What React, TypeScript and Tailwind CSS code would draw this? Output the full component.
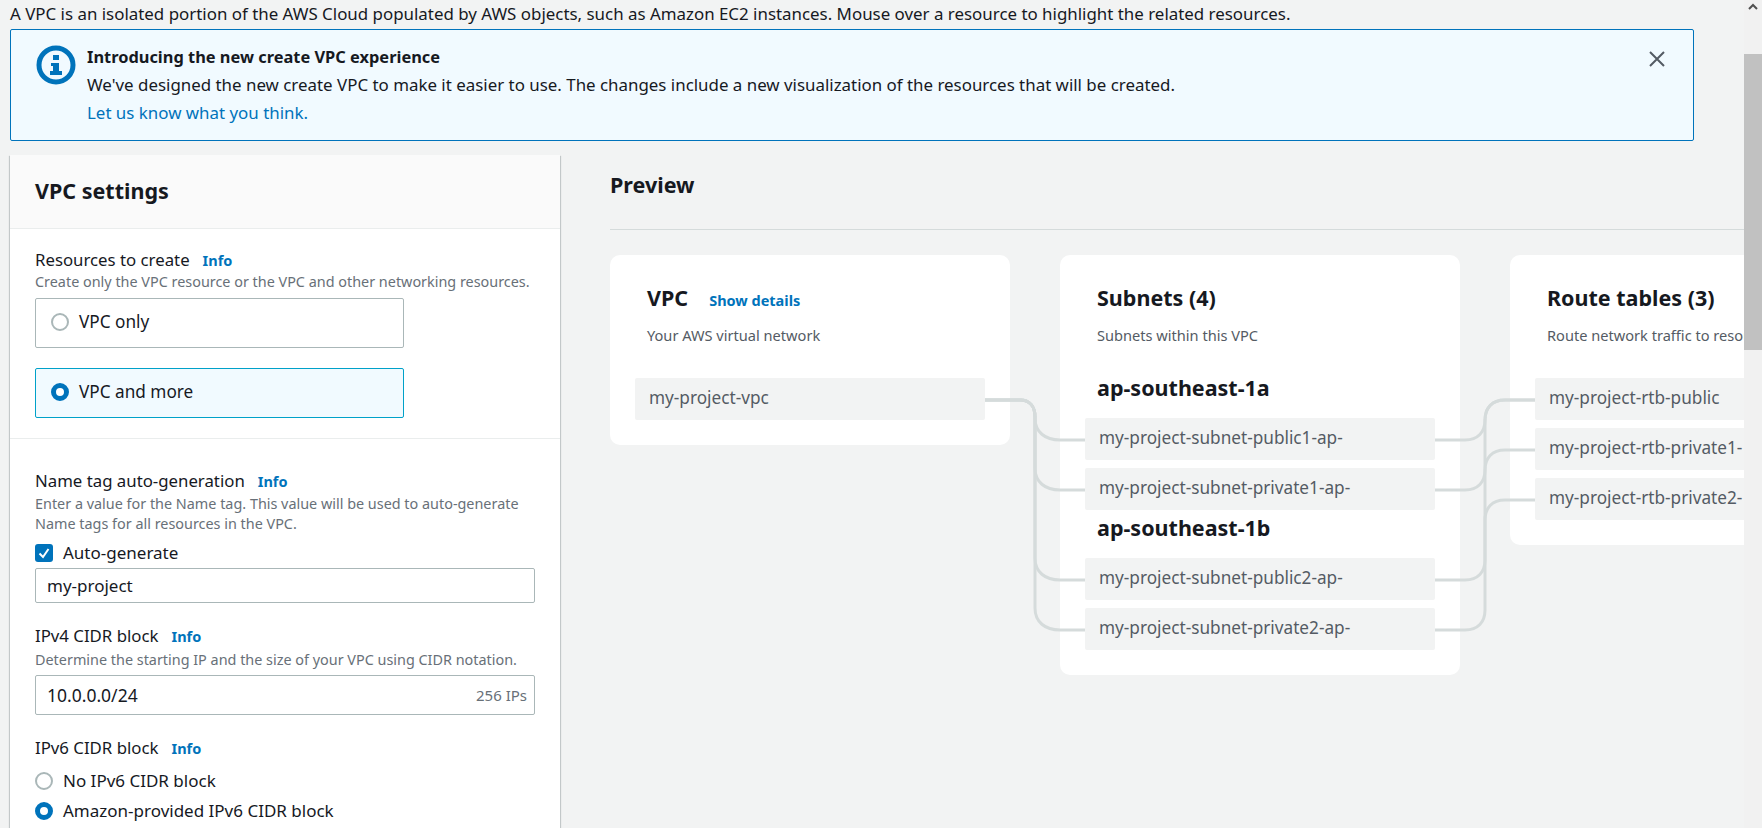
const info = 'text-[14.5px] font-bold text-[#0073bb]'

function Info() {
  return <span className={`${info} ml-[13px]`}>Info</span>
}

function Radio({ checked }: { checked?: boolean }) {
  return checked ? (
    <span className="w-[18px] h-[18px] rounded-full border-[5px] border-[#0073bb] bg-white shrink-0" />
  ) : (
    <span className="w-[18px] h-[18px] rounded-full border-2 border-[#aab7b8] bg-white shrink-0" />
  )
}

function Row({ children, className = '' }: { children: string; className?: string }) {
  return (
    <div className={`h-[42px] mx-[25px] px-[14px] pb-[2px] rounded-[2px] bg-[#f2f3f3] text-[17.2px] text-[#545b64] flex items-center whitespace-nowrap overflow-hidden ${className}`}>
      {children}
    </div>
  )
}

function Links() {
  const stroke = { fill: 'none', stroke: '#d5dbdb', strokeWidth: 3 }
  const left = [185, 235, 325, 375]
  // right side: each subnet goes up to its route table row
  const right = [
    [185, 145],
    [235, 195],
    [325, 145],
    [375, 245],
  ]
  return (
    <svg className="absolute left-0 top-0 z-10 pointer-events-none" width="1000" height="430">
      {left.map(y => (
        <path key={y} {...stroke} d={`M375 145 H410 C420 145 425 152 425 162 V${y - 22} C425 ${y - 8} 435 ${y} 450 ${y} H475`} />
      ))}
      {right.map(([from, to]) => (
        <path key={from} {...stroke} d={`M825 ${from} H855 C868 ${from} 875 ${from - 8} 875 ${from - 20} V${to + 20} C875 ${to + 8} 882 ${to} 895 ${to} H925`} />
      ))}
    </svg>
  )
}

export default function App() {
  return (
    <div className="h-[828px] w-full overflow-hidden flex bg-[#f2f3f3] text-[#16191f] font-['Noto_Sans',sans-serif]">
      <div className="flex-1 min-w-0 flex flex-col">
        <div className="h-[29px] pl-[10px] text-[16.9px] leading-[28px] whitespace-nowrap">
          A VPC is an isolated portion of the AWS Cloud populated by AWS objects, such as Amazon EC2 instances. Mouse over a resource to highlight the related resources.
        </div>

        {/* Alert */}
        <div className="ml-[10px] w-[1684px] h-[112px] shrink-0 border border-[#0073bb] rounded-[2px] bg-[#f1faff] flex pl-[25px] pr-[27px] pt-[13px]">
          <svg className="shrink-0 mt-[2px] mr-[11px]" width="40" height="40" viewBox="0 0 40 40">
            <circle cx="20" cy="20" r="17" fill="none" stroke="#0073bb" strokeWidth="5" />
            <rect x="17" y="10" width="6" height="5" fill="#0073bb" />
            <rect x="15" y="18" width="8" height="3" fill="#0073bb" />
            <rect x="17" y="18" width="6" height="10" fill="#0073bb" />
            <rect x="14" y="26" width="12" height="4" fill="#0073bb" />
          </svg>
          <div className="flex-1 text-[16.9px] leading-[28px]">
            <div className="font-bold text-[16.4px]">Introducing the new create VPC experience</div>
            <div>We've designed the new create VPC to make it easier to use. The changes include a new visualization of the resources that will be created.</div>
            <div className="text-[#0073bb]">Let us know what you think.</div>
          </div>
          <svg className="mt-[7px]" width="18" height="18" viewBox="0 0 18 18">
            <path d="M2 2 L16 16 M16 2 L2 16" fill="none" stroke="#545b64" strokeWidth="2" />
          </svg>
        </div>

        <div className="flex-1 min-h-0 flex mt-[14px]">
          {/* VPC settings */}
          <div className="ml-[10px] w-[550px] shrink-0 bg-white shadow-[0_1px_1px_0_rgba(0,28,36,0.3),1px_1px_1px_0_rgba(0,28,36,0.15),-1px_1px_1px_0_rgba(0,28,36,0.15)]">
            <div className="h-[74px] bg-[#fafafa] border-b border-[#eaeded] px-[25px] pt-[22px] text-[21.5px] leading-[28px] font-bold">
              VPC settings
            </div>

            <div className="h-[210px] px-[25px] pt-[18px] border-b border-[#eaeded]">
              <div className="h-[25px] text-[16.8px] leading-[26px]">
                Resources to create<Info />
              </div>
              <div className="h-[21px] text-[14.4px] leading-[20px] text-[#687078]">
                Create only the VPC resource or the VPC and other networking resources.
              </div>
              <label className="mt-[5px] w-[369px] h-[50px] rounded-[2px] border border-[#aab7b8] flex items-center pl-[15px] pb-[2px] gap-[10px] text-[17.2px]">
                <Radio />
                VPC only
              </label>
              <label className="mt-[20px] w-[369px] h-[50px] rounded-[2px] border border-[#00a1c9] bg-[#f1faff] flex items-center pl-[15px] pb-[2px] gap-[10px] text-[17.2px]">
                <Radio checked />
                VPC and more
              </label>
            </div>

            <div className="px-[25px] pt-[29px]">
              <div className="h-[26px] text-[16.8px] leading-[26px]">
                Name tag auto-generation<Info />
              </div>
              <div className="w-[500px] text-[14.4px] leading-[20px] text-[#687078]">
                Enter a value for the Name tag. This value will be used to auto-generate Name tags for all resources in the VPC.
              </div>
              <div className="mt-[6px] h-[26px] flex items-center gap-[10px] text-[17px]">
                <span className="w-[18px] h-[18px] rounded-[3px] bg-[#0073bb] flex items-center justify-center">
                  <svg width="14" height="14" viewBox="0 0 14 14">
                    <path d="M2.5 7.5 L6 11 L11.5 3" fill="none" stroke="#fff" strokeWidth="2" />
                  </svg>
                </span>
                Auto-generate
              </div>
              <div className="mt-[2px] w-[500px] h-[35px] rounded-[2px] border border-[#aab7b8] px-[11px] flex items-center text-[17px]">
                my-project
              </div>

              <div className="mt-[20px] h-[26px] text-[16.8px] leading-[26px]">
                IPv4 CIDR block<Info />
              </div>
              <div className="mt-[1px] h-[20px] text-[14.4px] leading-[20px] text-[#687078]">
                Determine the starting IP and the size of your VPC using CIDR notation.
              </div>
              <div className="mt-[5px] w-[500px] h-[40px] rounded-[2px] border border-[#aab7b8] pl-[11px] pr-[7px] flex items-center justify-between text-[17.5px]">
                10.0.0.0/24
                <span className="text-[15px] text-[#687078]">256 IPs</span>
              </div>

              <div className="mt-[20px] h-[26px] text-[16.8px] leading-[26px]">
                IPv6 CIDR block<Info />
              </div>
              <div className="mt-[7px] h-[26px] flex items-center gap-[10px] text-[17px]">
                <Radio />
                No IPv6 CIDR block
              </div>
              <div className="mt-[4px] h-[26px] flex items-center gap-[10px] text-[17px]">
                <Radio checked />
                Amazon-provided IPv6 CIDR block
              </div>
            </div>
          </div>

          {/* Preview */}
          <div className="flex-1 min-w-0 overflow-hidden pl-[50px]">
            <div className="h-[75px] border-b border-[#d5dbdb] pt-[16px] text-[21.5px] leading-[28px] font-bold">
              Preview
            </div>
            <div className="relative mt-[25px] flex items-start gap-[50px] w-[1200px]">
              <Links />
              <div className="w-[400px] h-[190px] shrink-0 rounded-[10px] bg-white pt-[29px]">
                <div className="px-[37px] h-[28px] flex items-baseline text-[21.5px] leading-[28px] font-bold">
                  VPC
                  <span className={`${info} ml-[21px]`}>Show details</span>
                </div>
                <div className="px-[37px] mt-[13px] h-[20px] text-[14.6px] leading-[20px] text-[#545b64]">Your AWS virtual network</div>
                <Row className="mt-[33px]">my-project-vpc</Row>
              </div>

              <div className="w-[400px] h-[420px] shrink-0 rounded-[10px] bg-white pt-[29px]">
                <div className="px-[37px] h-[28px] text-[21.5px] leading-[28px] font-bold">Subnets (4)</div>
                <div className="px-[37px] mt-[13px] h-[20px] text-[14.6px] leading-[20px] text-[#545b64]">Subnets within this VPC</div>
                <div className="px-[37px] mt-[29px] h-[28px] text-[21.5px] leading-[28px] font-bold">ap-southeast-1a</div>
                <Row className="mt-[16px]">my-project-subnet-public1-ap-</Row>
                <Row className="mt-[8px]">my-project-subnet-private1-ap-</Row>
                <div className="px-[37px] mt-[4px] h-[28px] text-[21.5px] leading-[28px] font-bold">ap-southeast-1b</div>
                <Row className="mt-[16px]">my-project-subnet-public2-ap-</Row>
                <Row className="mt-[8px]">my-project-subnet-private2-ap-</Row>
              </div>

              <div className="w-[400px] h-[290px] shrink-0 rounded-[10px] bg-white pt-[29px]">
                <div className="px-[37px] h-[28px] text-[21.5px] leading-[28px] font-bold">Route tables (3)</div>
                <div className="px-[37px] mt-[13px] h-[20px] text-[14.6px] leading-[20px] text-[#545b64]">Route network traffic to resources</div>
                <Row className="mt-[33px]">my-project-rtb-public</Row>
                <Row className="mt-[8px]">my-project-rtb-private1-</Row>
                <Row className="mt-[8px]">my-project-rtb-private2-</Row>
              </div>
            </div>
          </div>
        </div>
      </div>

      {/* Browser scrollbar */}
      <div className="w-[18px] shrink-0 bg-[#f1f1f1] flex flex-col items-center">
        <svg className="mt-[3px] mb-[43px]" width="10" height="8" viewBox="0 0 10 8">
          <path d="M1 6 L5 2 L9 6" fill="none" stroke="#505050" strokeWidth="2" />
        </svg>
        <div className="w-full h-[296px] bg-[#c1c1c1]" />
      </div>
    </div>
  )
}
